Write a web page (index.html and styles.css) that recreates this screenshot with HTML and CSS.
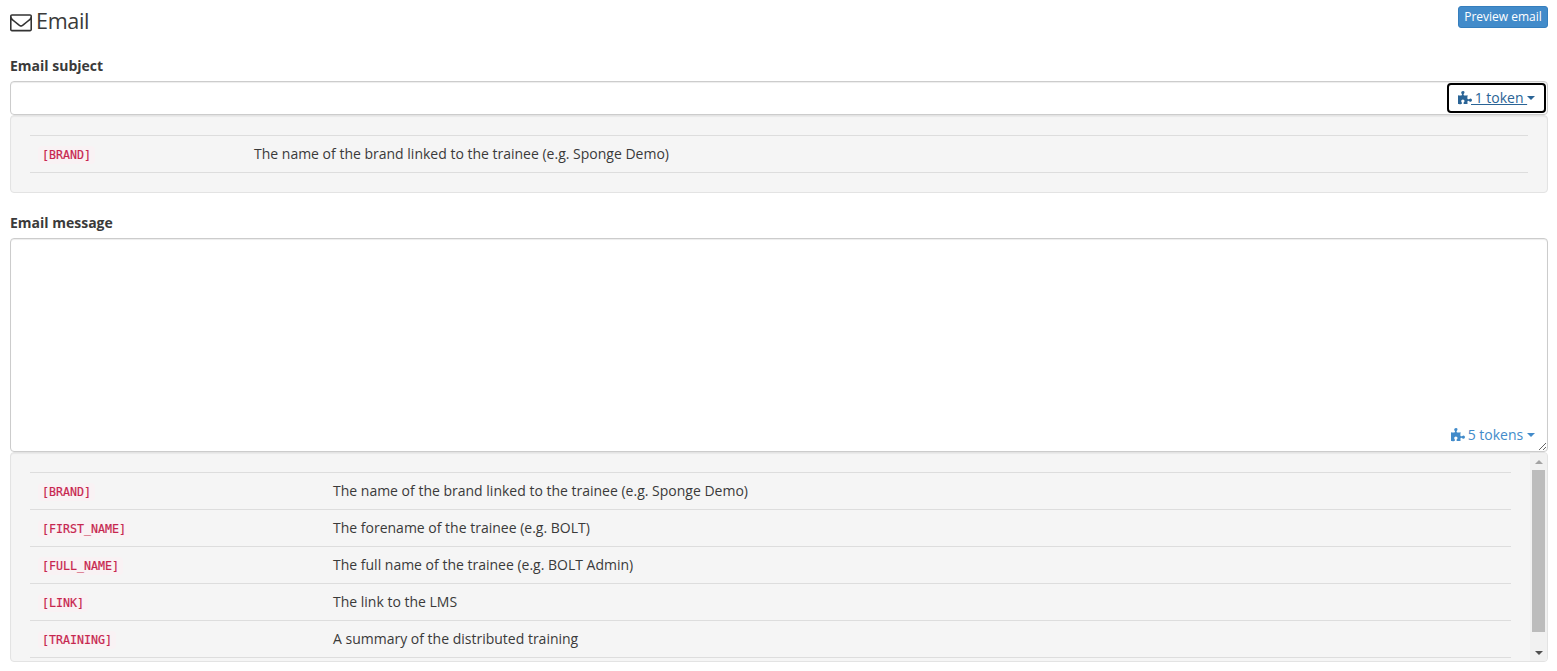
FILE: index.html
```html
<!DOCTYPE html>
<html lang="en">
<head>
<meta charset="utf-8">
<title>Email</title>
<link rel="stylesheet" href="styles.css">
</head>
<body>
<svg class="defs" width="0" height="0" aria-hidden="true">
  <symbol id="puzzle" viewBox="0 0 1792 1792"><path fill="currentColor" d="M1664 1098q0 81-44.5 135t-123.5 54q-41 0-77.5-17.5t-59-38-56.5-38-71-17.5q-110 0-110 124 0 39 16 115t15 115v5q-22 0-33 1-34 3-97.5 11.5t-115.5 13.5-98 5q-61 0-103-26.5t-42-83.5q0-37 17.5-71t38-56.5 38-59 17.5-77.5q0-79-54-123.5t-135-44.5q-84 0-143 45.5t-59 127.5q0 43 15 83t33.5 64.5 33.5 53 15 50.5q0 45-46 89-37 35-117 35-95 0-245-24-9-2-27.5-4t-27.5-4l-13-2q-1 0-3-1-2 0-2-1v-1024q2 1 17.5 3.5t34 5 21.5 3.5q150 24 245 24 80 0 117-35 46-44 46-89 0-22-15-50.5t-33.5-53-33.5-64.5-15-83q0-82 59-127.5t144-45.5q80 0 134 44.5t54 123.5q0 41-17.5 77.5t-38 59-38 56.5-17.5 71q0 57 42 83.5t103 26.5q64 0 180-15t163-17v2q-1 2-3.5 17.5t-5 34-3.5 21.5q-24 150-24 245 0 80 35 117 44 46 89 46 22 0 50.5-15t53-33.5 64.5-33.5 83-15q82 0 127.5 59t45.5 143z"/></symbol>
</svg>
<main class="page">
  <header class="head">
    <h3 class="title">
      <svg class="mail" viewBox="0 0 1792 1792" aria-hidden="true"><path fill="currentColor" d="M1664 1504v-768q-32 36-69 66-268 206-426 338-51 43-83 67t-86.5 48.5-102.5 24.5h-2q-48 0-102.5-24.5t-86.5-48.5-83-67q-158-132-426-338-37-30-69-66v768q0 13 9.5 22.5t22.5 9.5h1472q13 0 22.5-9.5t9.5-22.5zm0-1051v-24.5l-.5-13-3-12.5-5.5-9-9-7.5-14-2.5h-1472q-13 0-22.5 9.5t-9.5 22.5q0 168 147 284 193 152 401 317 6 5 35 29.5t46 37.5 44.5 31.5 50.5 27.5 43 9h2q20 0 43-9t50.5-27.5 44.5-31.5 46-37.5 35-29.5q208-165 401-317 54-43 100.5-115.5t46.5-131.5zm128-37v1088q0 66-47 113t-113 47h-1472q-66 0-113-47t-47-113v-1088q0-66 47-113t113-47h1472q66 0 113 47t47 113z"/></svg>
      Email
    </h3>
    <button class="btn-preview" type="button">Preview email</button>
  </header>

  <label class="label label-subject" for="subject">Email subject</label>
  <div class="field">
    <input class="control control-input" id="subject" type="text">
    <a class="tokens tokens-focus" href="#"><svg class="piece"><use href="#puzzle"/></svg><span class="tokens-text"> 1 token </span><span class="caret"></span></a>
  </div>
  <section class="well well-subject">
    <table class="tbl tbl-subject">
      <tr><td class="c1"><code>[BRAND]</code></td><td>The name of the brand linked to the trainee (e.g. Sponge Demo)</td></tr>
    </table>
  </section>

  <label class="label label-message" for="message">Email message</label>
  <div class="field">
    <textarea class="control control-area" id="message"></textarea>
    <a class="tokens tokens-plain" href="#"><svg class="piece"><use href="#puzzle"/></svg><span> 5 tokens </span><span class="caret"></span></a>
  </div>
  <section class="well well-message">
    <table class="tbl tbl-message">
      <tr><td class="c1"><code>[BRAND]</code></td><td>The name of the brand linked to the trainee (e.g. Sponge Demo)</td></tr>
      <tr><td class="c1"><code>[FIRST_NAME]</code></td><td>The forename of the trainee (e.g. BOLT)</td></tr>
      <tr><td class="c1"><code>[FULL_NAME]</code></td><td>The full name of the trainee (e.g. BOLT Admin)</td></tr>
      <tr><td class="c1"><code>[LINK]</code></td><td>The link to the LMS</td></tr>
      <tr><td class="c1"><code>[TRAINING]</code></td><td>A summary of the distributed training</td></tr>
    </table>
    <div class="scrollbar" aria-hidden="true">
      <div class="sb-btn"><span class="arrow-up"></span></div>
      <div class="sb-track"><div class="sb-thumb"></div></div>
      <div class="sb-btn"><span class="arrow-down"></span></div>
    </div>
  </section>
</main>
</body>
</html>
```

FILE: styles.css
```css
* { box-sizing: border-box; }
html, body { margin: 0; height: 100%; overflow: hidden; background: #fff; }
body { font-family: "Open Sans", sans-serif; font-size: 14px; line-height: 20px; color: #3a3a3a; }
.defs { position: absolute; }
.page { padding: 0 9px 0 10px; }

.head { display: flex; justify-content: space-between; align-items: flex-start; height: 56px; padding-top: 6px; }
.title { margin: -1px 0 0; display: flex; align-items: center; gap: 4px; font-size: 21.6px; font-weight: 400; line-height: 32px; letter-spacing: -.35px; color: #3a3a3a; }
.mail { width: 22px; height: 22px; color: #333; margin-top: 1px; }
.btn-preview { width: 90px; height: 22px; padding: 0; border: 1px solid #357ebd; border-radius: 3px; background: #428bca; color: #fff; font: 12px/20px "Open Sans", sans-serif; }

.label { display: block; height: 20px; font-weight: 700; margin-bottom: 5px; }
.label-message { margin-top: 20px; }

.field { position: relative; }
.control { display: block; width: 100%; border: 1px solid #ccc; border-radius: 4px; background: #fff; box-shadow: inset 0 1px 1px rgba(0,0,0,.075); font: inherit; color: #555; padding: 6px 12px; margin: 0; outline: none; }
.control-input { height: 34px; }
.control-area { height: 214px; resize: vertical; }

.tokens { position: absolute; display: flex; align-items: center; width: 99px; height: 30px; padding: 0 0 0 11px; text-decoration: none; white-space: pre; }
.tokens-focus { top: 2px; right: 2px; color: #2a6496; border-radius: 4px; outline: 2px solid #000; outline-offset: -2px; }
.tokens-focus .tokens-text { text-decoration: underline; }
.tokens-plain { bottom: 2px; right: 9px; color: #428bca; }
.piece { width: 15px; height: 15px; margin: 0 -2px 0 0; flex: none; }
.caret { width: 0; height: 0; border-top: 4px solid currentColor; border-left: 4px solid transparent; border-right: 4px solid transparent; }

.well { position: relative; overflow: hidden; background: #f5f5f5; border: 1px solid #e3e3e3; border-radius: 4px; padding: 19px; box-shadow: inset 0 1px 1px rgba(0,0,0,.05); }
.well-subject { height: 78px; }
.well-message { height: 210px; padding-right: 36px; }

.scrollbar { position: absolute; top: 0; right: 0; bottom: 0; width: 17px; display: flex; flex-direction: column; background: #f1f1f1; }
.sb-btn { flex: none; height: 17px; display: flex; align-items: center; justify-content: center; }
.sb-track { flex: 1; padding: 0 2px; }
.sb-thumb { height: 162px; background: #bcbcbc; }
.arrow-up { border-bottom: 4px solid #a3a3a3; border-left: 4px solid transparent; border-right: 4px solid transparent; }
.arrow-down { border-top: 4px solid #505050; border-left: 4px solid transparent; border-right: 4px solid transparent; }

.tbl { width: 100%; border-collapse: collapse; table-layout: fixed; }
.tbl td { height: 37px; padding: 0 8px; border-top: 1px solid #ddd; border-bottom: 1px solid #ddd; vertical-align: middle; line-height: 20px; }
.tbl-subject .c1 { width: 216px; }
.tbl-message .c1 { width: 295px; }
code { font-family: "DejaVu Sans Mono", monospace; font-size: 11.63px; line-height: 14px; color: #c7254e; background: #f9f2f4; padding: 2px 4px; border-radius: 4px; -webkit-text-stroke: .2px #c7254e; }
```
